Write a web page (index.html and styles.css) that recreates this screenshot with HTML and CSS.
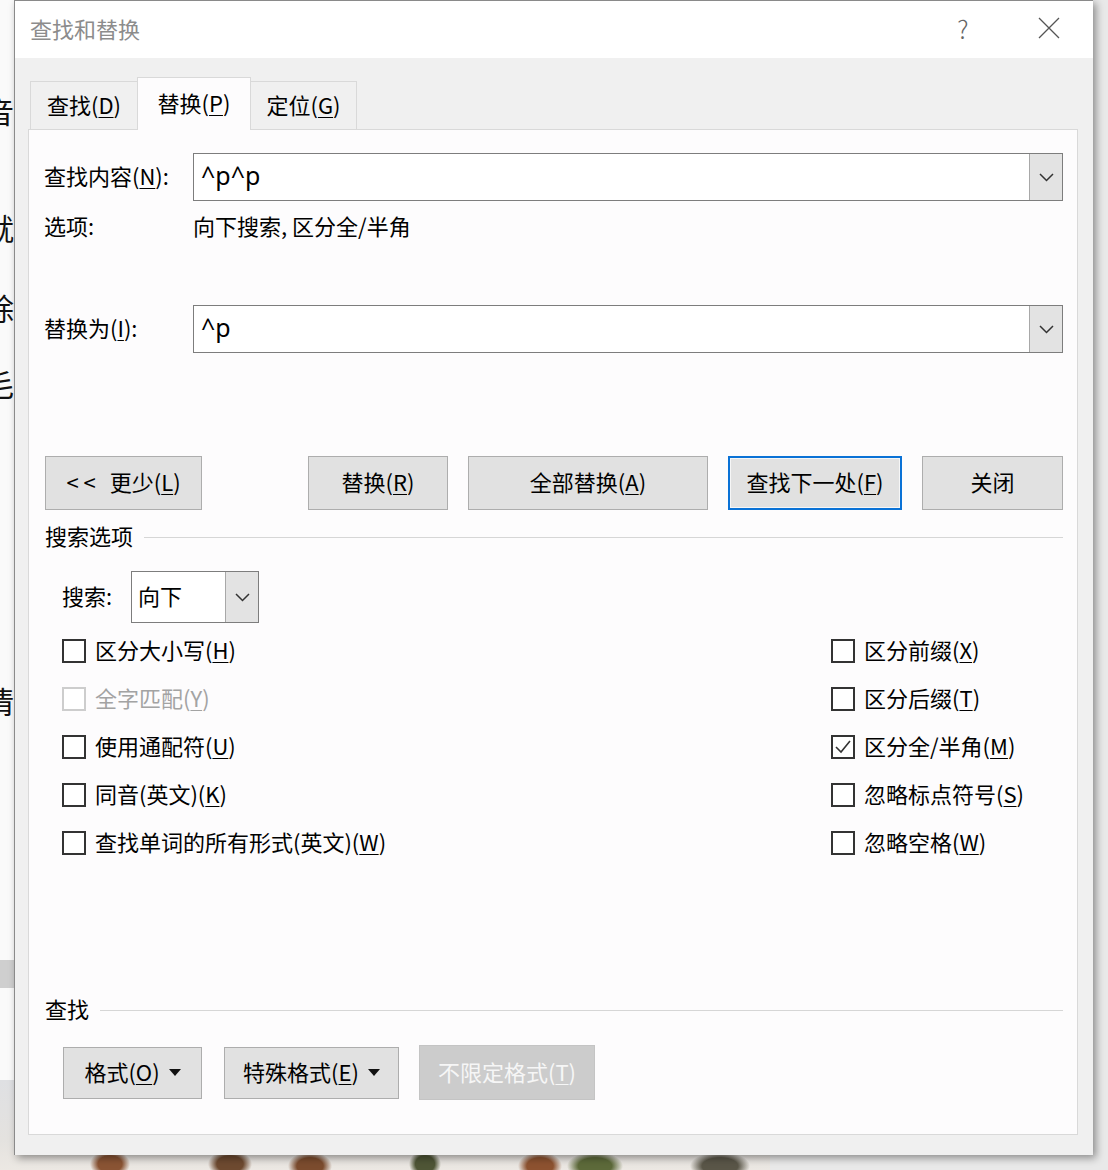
FILE: index.html
```html
<!DOCTYPE html>
<html lang="zh-CN">
<head>
    <meta charset="UTF-8">
    <meta name="viewport" content="width=device-width, initial-scale=1.0">
    <title>查找和替换</title>
    <link rel="stylesheet" href="styles.css">
</head>
<body>

    <div class="doc">
        <div class="doc-char c1">音</div>
        <div class="doc-char c2">就</div>
        <div class="doc-char c3">除</div>
        <div class="doc-char c4">毛</div>
        <div class="doc-char c5">情</div>
        <div class="doc-bar"></div>
        <div class="doc-photo"></div>
    </div>

    <div class="dialog">
        <div class="titlebar">
            <span class="title">查找和替换</span>
            <span class="help">?</span>
            <span class="close">
                <svg width="22" height="22" viewBox="0 0 22 22"><path d="M1 1 L21 21 M21 1 L1 21" stroke="#555" stroke-width="1.3" fill="none"/></svg>
            </span>
        </div>

        <div class="body">
            <div class="tabs">
                <div class="tab tab-first"><span class="txt">查找(<u>D</u>)</span></div>
                <div class="tab active"><span class="txt">替换(<u>P</u>)</span></div>
                <div class="tab tab-last"><span class="txt">定位(<u>G</u>)</span></div>
            </div>

            <div class="panel">
                <div class="field-row find-row">
                    <span class="field-label txt">查找内容(<u>N</u>):</span>
                    <div class="combo">
                        <span class="combo-text">^p^p</span>
                        <span class="combo-drop">
                            <svg width="15" height="9" viewBox="0 0 15 9"><polyline points="1,1 7.5,7.5 14,1" stroke="#333" stroke-width="1.5" fill="none"/></svg>
                        </span>
                    </div>
                </div>

                <div class="info-row">
                    <span class="field-label txt">选项:</span>
                    <span class="txt">向下搜索, 区分全/半角</span>
                </div>

                <div class="field-row replace-row">
                    <span class="field-label txt">替换为(<u>I</u>):</span>
                    <div class="combo">
                        <span class="combo-text">^p</span>
                        <span class="combo-drop">
                            <svg width="15" height="9" viewBox="0 0 15 9"><polyline points="1,1 7.5,7.5 14,1" stroke="#333" stroke-width="1.5" fill="none"/></svg>
                        </span>
                    </div>
                </div>

                <div class="actions">
                    <button class="btn btn-less"><span class="txt"><span class="arrows">&lt;&lt;</span> 更少(<u>L</u>)</span></button>
                    <div class="action-group">
                        <button class="btn btn-replace"><span class="txt">替换(<u>R</u>)</span></button>
                        <button class="btn btn-all"><span class="txt">全部替换(<u>A</u>)</span></button>
                        <button class="btn btn-next"><span class="txt">查找下一处(<u>F</u>)</span></button>
                        <button class="btn btn-close"><span class="txt">关闭</span></button>
                    </div>
                </div>

                <div class="group-title"><span class="txt">搜索选项</span></div>

                <div class="search-dir">
                    <span class="dir-label txt">搜索:</span>
                    <div class="select">
                        <span class="select-text txt">向下</span>
                        <span class="combo-drop">
                            <svg width="15" height="9" viewBox="0 0 15 9"><polyline points="1,1 7.5,7.5 14,1" stroke="#333" stroke-width="1.5" fill="none"/></svg>
                        </span>
                    </div>
                </div>

                <div class="options">
                    <div class="opt-col">
                        <div class="check"><span class="box"></span><span class="txt">区分大小写(<u>H</u>)</span></div>
                        <div class="check disabled"><span class="box"></span><span class="txt">全字匹配(<u>Y</u>)</span></div>
                        <div class="check"><span class="box"></span><span class="txt">使用通配符(<u>U</u>)</span></div>
                        <div class="check"><span class="box"></span><span class="txt">同音(英文)(<u>K</u>)</span></div>
                        <div class="check"><span class="box"></span><span class="txt">查找单词的所有形式(英文)(<u>W</u>)</span></div>
                    </div>
                    <div class="opt-col">
                        <div class="check"><span class="box"></span><span class="txt">区分前缀(<u>X</u>)</span></div>
                        <div class="check"><span class="box"></span><span class="txt">区分后缀(<u>T</u>)</span></div>
                        <div class="check"><span class="box"><svg width="20" height="20" viewBox="0 0 20 20"><polyline points="3,10 8,15 17,4" stroke="#333" stroke-width="1.6" fill="none"/></svg></span><span class="txt">区分全/半角(<u>M</u>)</span></div>
                        <div class="check"><span class="box"></span><span class="txt">忽略标点符号(<u>S</u>)</span></div>
                        <div class="check"><span class="box"></span><span class="txt">忽略空格(<u>W</u>)</span></div>
                    </div>
                </div>

                <div class="group-title find-title"><span class="txt">查找</span></div>

                <div class="format-row">
                    <button class="btn btn-format"><span class="txt">格式(<u>O</u>)</span><svg width="12" height="7" viewBox="0 0 12 7"><polygon points="0,0 12,0 6,7" fill="#111"/></svg></button>
                    <button class="btn btn-special"><span class="txt">特殊格式(<u>E</u>)</span><svg width="12" height="7" viewBox="0 0 12 7"><polygon points="0,0 12,0 6,7" fill="#111"/></svg></button>
                    <button class="btn btn-noformat"><span class="txt">不限定格式(<u>T</u>)</span></button>
                </div>
            </div>
        </div>
    </div>

</body>
</html>
```

FILE: styles.css
```css
body {
    margin: 0;
    width: 1108px;
    height: 1170px;
    overflow: hidden;
    position: relative;
    background: #e9e9e9;
    font-family: "Noto Sans CJK SC", sans-serif;
    color: #000;
}

/* document behind the dialog */
.doc {
    width: 770px;
    height: 1170px;
    background: #fafafa;
    display: flex;
    flex-direction: column;
}
.doc-char {
    font-size: 30px;
    line-height: 30px;
    margin-left: -16px;
    color: #111;
}
.c1 { margin-top: 95px; }
.c2 { margin-top: 87px; }
.c3 { margin-top: 50px; }
.c4 { margin-top: 46px; }
.c5 { margin-top: 287px; }
.doc-bar {
    margin-top: 245px;
    width: 14px;
    height: 28px;
    background: #cfcfcf;
}
.doc-photo {
    margin-top: 92px;
    height: 90px;
    background:
        radial-gradient(ellipse 20px 14px at 110px 84px, #8a5434 60%, rgba(0, 0, 0, 0)),
        radial-gradient(ellipse 22px 14px at 230px 84px, #6e4a30 60%, rgba(0, 0, 0, 0)),
        radial-gradient(ellipse 22px 14px at 310px 86px, #7c4c2e 60%, rgba(0, 0, 0, 0)),
        radial-gradient(ellipse 16px 14px at 425px 84px, #4f5636 60%, rgba(0, 0, 0, 0)),
        radial-gradient(ellipse 22px 14px at 540px 86px, #8d5230 60%, rgba(0, 0, 0, 0)),
        radial-gradient(ellipse 28px 14px at 595px 86px, #5d6a3a 60%, rgba(0, 0, 0, 0)),
        radial-gradient(ellipse 30px 14px at 720px 86px, #5a5648 60%, rgba(0, 0, 0, 0)),
        linear-gradient(180deg, #dfe0e3 0, #e4e2df 60px, #ece8e3 90px);
}

/* dialog window */
.dialog {
    position: absolute;
    left: 14px;
    top: 0;
    width: 1079px;
    height: 1155px;
    box-sizing: border-box;
    border-top: 1px solid #8a8a8a;
    border-left: 1px solid #8a8a8a;
    background: #f0f0f0;
    box-shadow: 3px 3px 8px rgba(0, 0, 0, 0.4);
    display: flex;
    flex-direction: column;
}
.titlebar {
    height: 57px;
    box-sizing: border-box;
    padding: 0 21px 4px 15px;
    background: #fff;
    display: flex;
    align-items: center;
}
.title {
    flex: 1;
    font-size: 22px;
    color: #8c8c8c;
}
.help {
    width: 46px;
    text-align: center;
    font-size: 25px;
    font-weight: 300;
    color: #666;
}
.close {
    width: 46px;
    margin-left: 40px;
    display: flex;
    justify-content: center;
}

.body {
    flex: 1;
    display: flex;
    flex-direction: column;
    padding: 19px 15px 20px 13px;
}

/* Noto CJK glyphs sit a little low in their line box */
.txt {
    padding-bottom: 4px;
}

/* tabs */
.tabs {
    display: flex;
    align-items: flex-end;
    height: 52px;
    margin-left: 2px;
}
.tab {
    height: 48px;
    box-sizing: border-box;
    border: 1px solid #d9d9d9;
    border-bottom: 0;
    background: #f0f0f0;
    display: flex;
    align-items: center;
    justify-content: center;
    font-size: 22px;
}
.tab-first {
    width: 107px;
    border-right: 0;
}
.tab-last {
    width: 106px;
    border-left: 0;
}
.tab.active {
    width: 114px;
    height: 53px;
    margin-bottom: -1px;
    background: #fdfcfd;
    position: relative;
    z-index: 1;
}

/* tab page */
.panel {
    flex: 1;
    background: #fdfcfd;
    border: 1px solid #d9d9d9;
    padding: 0 14px 0 15px;
    font-size: 22px;
}
.field-row {
    display: flex;
    align-items: center;
}
.find-row { margin-top: 23px; }
.replace-row { margin-top: 64px; }
.field-label {
    width: 149px;
    flex-shrink: 0;
}
.combo {
    flex: 1;
    height: 48px;
    box-sizing: border-box;
    border: 1px solid #7d7d7d;
    background: #fff;
    display: flex;
}
.combo-text {
    flex: 1;
    padding-left: 7px;
    font-family: "Noto Sans", sans-serif;
    font-size: 25px;
    line-height: 42px;
}
.combo-drop {
    width: 32px;
    background: #e3e3e3;
    border-left: 1px solid #a8a8a8;
    display: flex;
    align-items: center;
    justify-content: center;
}
.info-row {
    display: flex;
    align-items: center;
    height: 28px;
    margin-top: 12px;
}

/* buttons */
.btn {
    height: 54px;
    box-sizing: border-box;
    border: 1px solid #adadad;
    background: #e1e1e1;
    font-family: inherit;
    font-size: 22px;
    color: #000;
    padding: 0;
    display: flex;
    align-items: center;
    justify-content: center;
}
.actions {
    display: flex;
    margin-top: 103px;
    padding-left: 1px;
}
.action-group {
    display: flex;
    gap: 20px;
    margin-left: auto;
}
.btn-less { width: 157px; }
.arrows {
    letter-spacing: 5px;
    margin-right: 4px;
}
.btn-replace { width: 140px; }
.btn-all { width: 240px; }
.btn-next {
    width: 174px;
    border: 2px solid #0a72d6;
    box-shadow: inset 0 0 0 1px #f6f6f6;
}
.btn-close { width: 141px; }

u {
    text-decoration: underline;
    text-decoration-thickness: 1px;
    text-underline-offset: 3px;
}

/* groups */
.group-title {
    display: flex;
    align-items: center;
    height: 28px;
    margin-top: 13px;
    padding-left: 1px;
}
.group-title::after {
    content: "";
    flex: 1;
    height: 1px;
    background: #d6d6d6;
    margin-left: 11px;
}
.find-title { margin-top: 129px; }

.search-dir {
    display: flex;
    align-items: center;
    margin-top: 20px;
    padding-left: 18px;
}
.dir-label { width: 69px; }
.select {
    width: 128px;
    height: 52px;
    box-sizing: border-box;
    border: 1px solid #7d7d7d;
    background: #fff;
    display: flex;
    align-items: center;
}
.select-text {
    flex: 1;
    padding-left: 6px;
}
.select .combo-drop {
    align-self: stretch;
}

/* checkboxes */
.options {
    display: grid;
    grid-template-columns: 769px 1fr;
    margin-top: 4px;
    padding-left: 18px;
}
.check {
    height: 48px;
    display: flex;
    align-items: center;
    gap: 9px;
}
.box {
    width: 24px;
    height: 24px;
    box-sizing: border-box;
    border: 2px solid #333;
    background: #fff;
    display: flex;
    align-items: center;
    justify-content: center;
}
.check.disabled { color: #a3a3a3; }
.check.disabled .box { border-color: #cdcdcd; }

/* format buttons */
.format-row {
    display: flex;
    align-items: center;
    margin-top: 21px;
    padding-left: 19px;
}
.btn-format {
    width: 139px;
    height: 52px;
    gap: 9px;
}
.btn-special {
    width: 175px;
    height: 52px;
    gap: 9px;
    margin-left: 22px;
}
.btn-noformat {
    width: 176px;
    height: 55px;
    margin-left: 20px;
    background: #cccccc;
    border-color: #c4c4c4;
    color: #f6f6f6;
}
```
